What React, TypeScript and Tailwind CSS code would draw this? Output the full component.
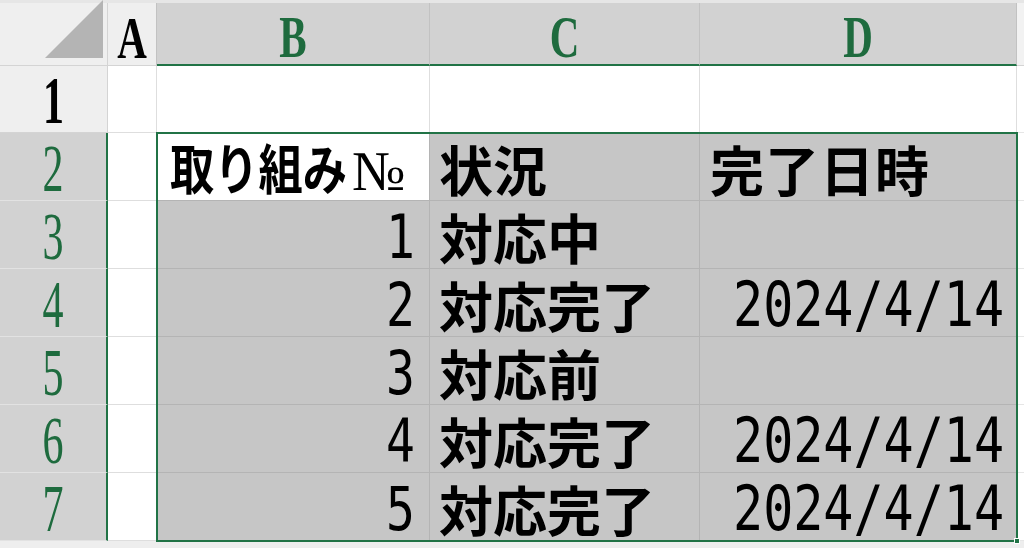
import React from 'react'

const GREEN = 'text-[#1e6b3e]'

const cols = ['A', 'B', 'C', 'D']

const rows = [
  { no: '', status: '', date: '' },
  { no: 'head', status: '状況', date: '完了日時' },
  { no: '1', status: '対応中', date: '' },
  { no: '2', status: '対応完了', date: '2024/4/14' },
  { no: '3', status: '対応前', date: '' },
  { no: '4', status: '対応完了', date: '2024/4/14' },
  { no: '5', status: '対応完了', date: '2024/4/14' },
]

const grid = 'grid grid-cols-[108px_49px_273px_270px_317px_7px]'

function ColHeader({ label, selected }: { label: string; selected: boolean }) {
  return (
    <div
      className={`h-[63px] flex items-center justify-center border-r border-[#c2c2c2] ${
        selected ? 'bg-[#d2d2d2] border-b-2 border-b-[#217346]' : 'bg-[#efefef] border-b border-b-[#d4d4d4]'
      }`}
    >
      <span
        className={`inline-block text-[41px] leading-none font-bold scale-y-[1.45] translate-y-[4px] ${selected ? GREEN : 'text-black'}`}
        style={{ fontFamily: '"Liberation Serif", serif' }}
      >
        {label}
      </span>
    </div>
  )
}

const cjk = { fontFamily: '"Noto Sans CJK JP", sans-serif' }
const mono = { fontFamily: '"DejaVu Sans Mono", monospace' }

export default function App() {
  return (
    <div className="relative w-[1024px] h-[548px] overflow-hidden bg-[#eeeeee]">
      <div className="h-[3px] bg-[#e6e6e6]" />

      {/* column headers */}
      <div className={grid}>
        <div className="h-[63px] bg-[#efefef] border-r border-b border-[#d4d4d4] flex items-end justify-end pr-[4px] pb-[7px]">
          <div className="w-[58px] h-[58px] bg-[#b4b4b4] [clip-path:polygon(100%_0,100%_100%,0_100%)]" />
        </div>
        {cols.map((c) => (
          <ColHeader key={c} label={c} selected={c !== 'A'} />
        ))}
        <div className="h-[63px] bg-[#f2f2f2] border-b border-[#d4d4d4]" />
      </div>

      {/* rows */}
      {rows.map((r, i) => {
        const sel = i > 0
        const h = i === 0 ? 'h-[67px]' : 'h-[68px]'
        const cell = sel ? 'bg-[#c6c6c6] border-r border-b border-[#b4b4b4]' : 'bg-white border-r border-b border-[#dedede]'
        return (
          <div key={i} className={grid}>
            <div
              className={`${h} flex items-center justify-center border-b ${
                sel
                  ? 'bg-[#d2d2d2] border-b-[#e2e2e2] border-r-2 border-r-[#217346]'
                  : 'bg-[#efefef] border-b-[#d4d4d4] border-r border-r-[#d4d4d4]'
              }`}
            >
              <span
                className={`inline-block text-[42px] leading-none scale-y-[1.6] translate-y-[2px] ${sel ? GREEN : 'text-black font-bold'}`}
                style={{ fontFamily: '"Liberation Serif", serif' }}
              >
                {i + 1}
              </span>
            </div>
            <div className={`${h} bg-white border-r border-b border-[#dedede]`} />

            {/* B */}
            <div
              className={`${h} flex items-center ${
                i === 1 ? 'bg-white border-r border-b border-[#b4b4b4] pl-[13px]' : `${cell} justify-end pr-[14px]`
              }`}
            >
              {r.no === 'head' ? (
                <span className="flex items-baseline whitespace-nowrap translate-y-[3px] text-black">
                  <span className="inline-block origin-left scale-x-[0.82] w-[150px] text-[54px] leading-none font-bold" style={cjk}>
                    取り組み
                  </span>
                  <span className="inline-block text-[56px] leading-none ml-[32px]" style={{ fontFamily: '"Liberation Serif", "DejaVu Serif", serif' }}>
                    №
                  </span>
                </span>
              ) : (
                <span className="inline-block text-[48px] leading-none scale-y-[1.25] text-black translate-y-[2px]" style={mono}>
                  {r.no}
                </span>
              )}
            </div>

            {/* C */}
            <div className={`${h} ${cell} flex items-center pl-[9px]`}>
              <span className="text-[54px] leading-none font-bold text-black whitespace-nowrap translate-y-[2px]" style={cjk}>
                {r.status}
              </span>
            </div>

            {/* D */}
            <div className={`${h} ${cell} flex items-center ${i === 1 ? 'pl-[10px]' : 'justify-end pr-[12px]'}`}>
              {i === 1 ? (
                <span className="text-[54px] leading-none font-bold text-black tracking-[1px] whitespace-nowrap translate-y-[2px]" style={cjk}>
                  {r.date}
                </span>
              ) : (
                <span className="inline-block text-[50px] leading-none scale-y-[1.25] text-black whitespace-nowrap translate-y-[2px]" style={mono}>
                  {r.date}
                </span>
              )}
            </div>
            <div className={`${h} bg-white border-b border-[#e6e6e6]`} />
          </div>
        )
      })}

      {/* selection outline B2:D7 */}
      <div className="absolute left-[156px] top-[132px] w-[862px] h-[410px] border-2 border-[#217346] pointer-events-none" />
      <div className="absolute left-[1014px] top-[538px] w-[6px] h-[6px] bg-[#217346] border border-white" />
    </div>
  )
}
